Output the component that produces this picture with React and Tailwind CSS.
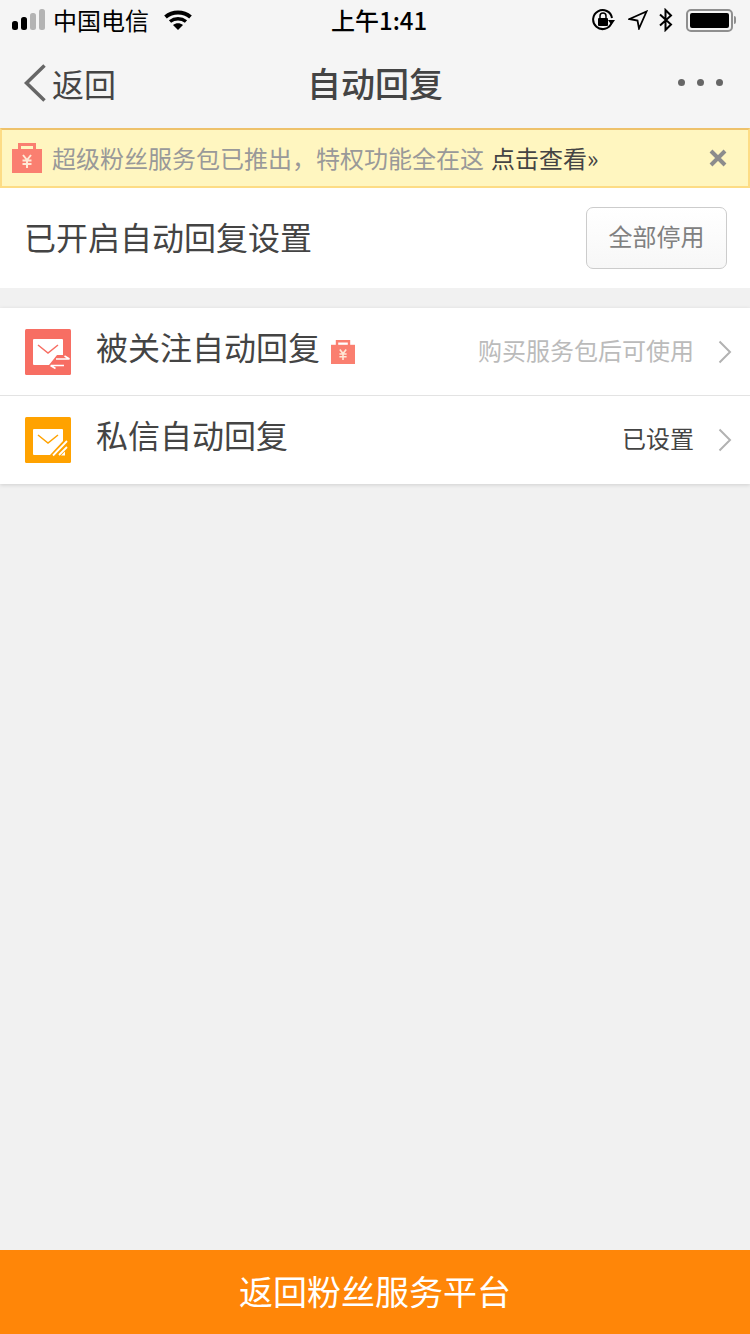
import React from "react";

const font = { fontFamily: '"Noto Sans CJK SC", "Liberation Sans", sans-serif' };

const BagIcon = ({ className }) => (
  <svg viewBox="0 0 30 30" className={className}>
    <path d="M7.500 7V1.500h15V7" fill="none" stroke="#fa7f70" strokeWidth="3" />
    <rect x="0" y="6" width="30" height="24" fill="#fa7f70" />
    <path d="M11 12l4 5 4-5M10.500 17.500h9M10.500 21h9M15 17v8" fill="none" stroke="#ffe9d6" strokeWidth="2" />
  </svg>
);

const MailFollowIcon = () => (
  <svg viewBox="0 0 46 46" className="w-[46px] h-[46px] shrink-0">
    <rect width="46" height="46" rx="1.500" fill="#f76e63" />
    <path d="M9 10h28a1 1 0 0 1 1 1v15h-6l-8 10H9a1 1 0 0 1-1-1V11a1 1 0 0 1 1-1z" fill="#fff" />
    <path d="M13 16l10 8 10-8" fill="none" stroke="#f76e63" strokeWidth="1.500" />
    <path d="M31 30h13.500M44.500 30l-5-3M26 36.500h13M25.500 36.500l5 3" fill="none" stroke="#fff" strokeWidth="1.600" />
  </svg>
);

const MailPrivateIcon = () => (
  <svg viewBox="0 0 46 46" className="w-[46px] h-[46px] shrink-0">
    <rect width="46" height="46" rx="1.500" fill="#ffa200" />
    <path d="M9 12h28a1 1 0 0 1 1 1v11L25 38H9a1 1 0 0 1-1-1V13a1 1 0 0 1 1-1z" fill="#fff" />
    <path d="M13 18l10 8 10-8" fill="none" stroke="#ffa200" strokeWidth="1.500" />
    <path d="M28 38.500L42 24M34 38l8-8" fill="none" stroke="#fff" strokeWidth="1.800" />
    <path d="M36 38.500h4v-4z" fill="#fff" />
  </svg>
);

const Chevron = () => (
  <svg viewBox="0 0 16 24" className="w-4 h-6 ml-[23px] shrink-0">
    <path d="M2.500 1.500L13 12 2.500 22.500" fill="none" stroke="#b2b2b2" strokeWidth="2" />
  </svg>
);

const StatusBar = () => (
  <div className="h-10 flex items-center relative text-black">
    <svg viewBox="0 0 34 22" className="w-[34px] h-[22px] ml-3">
      <rect x="0" y="12" width="6" height="9" rx="2.500" fill="#000" />
      <rect x="9" y="8" width="6" height="13" rx="2.500" fill="#000" />
      <rect x="18" y="4" width="6" height="17" rx="2.500" fill="#b4b4b4" />
      <rect x="27" y="0" width="6" height="21" rx="2.500" fill="#b4b4b4" />
    </svg>
    <span className="text-[24px] leading-none ml-[7px]">中国电信</span>
    <svg viewBox="0 0 28 20" className="w-7 h-5 ml-[15px]">
      <path d="M1.500 7C8.500 1 19.500 1 26.500 7" fill="none" stroke="#000" strokeWidth="4" />
      <path d="M6 11.500c4.800-3.800 11.200-3.800 16 0" fill="none" stroke="#000" strokeWidth="3.500" />
      <path d="M9 15c3-2.300 7-2.300 10 0l-5 5z" fill="#000" />
    </svg>
    <span className="absolute left-[331px] top-[5px] text-[24px] leading-[30px] font-medium">上午1:41</span>
    <div className="ml-auto mr-[14px] flex items-center">
      <svg viewBox="0 0 24 24" className="w-6 h-6">
        <path d="M20.500 15A9.500 9.500 0 1 1 21 10" fill="none" stroke="#000" strokeWidth="2" />
        <path d="M17 12h7l-3.500 5z" fill="#000" />
        <rect x="7" y="10" width="10" height="8" rx="1" fill="#000" />
        <path d="M9 10V8a3 3 0 0 1 6 0v2" fill="none" stroke="#000" strokeWidth="1.500" />
      </svg>
      <svg viewBox="0 0 20 20" className="w-5 h-5 ml-[13px]">
        <path d="M1.500 9L18.500 1.500 11 18.500 9.500 10.500z" fill="none" stroke="#000" strokeWidth="1.800" strokeLinejoin="miter" />
      </svg>
      <svg viewBox="0 0 16 24" className="w-4 h-6 ml-[10px]">
        <path d="M2 6.500L13 16.500 7.500 22V2L13 7.500 2 17.500" fill="none" stroke="#000" strokeWidth="2" />
      </svg>
      <div className="ml-[12px] w-[47px] h-[23px] border-[2px] border-[#8f8f8f] rounded-[5px] p-[2px]">
        <div className="w-full h-full bg-black rounded-[2px]" />
      </div>
      <div className="w-[2px] h-2 bg-[#8f8f8f] ml-[1px] rounded-r-sm" />
    </div>
  </div>
);

const NavBar = () => (
  <div className="h-[88px] flex items-center relative pb-[3px]">
    <svg viewBox="0 0 24 38" className="w-6 h-[38px] ml-[23px]">
      <path d="M21.500 1.500L3.500 19l18 17.500" fill="none" stroke="#666" strokeWidth="3.500" />
    </svg>
    <span className="text-[32px] leading-none text-[#444] ml-[5px]">返回</span>
    <span className="absolute left-0 right-0 text-center text-[34px] leading-none font-medium text-[#444]">自动回复</span>
    <div className="ml-auto mr-[27px] flex gap-[12px]">
      <i className="block w-[7px] h-[7px] rounded-full bg-[#666]" />
      <i className="block w-[7px] h-[7px] rounded-full bg-[#666]" />
      <i className="block w-[7px] h-[7px] rounded-full bg-[#666]" />
    </div>
  </div>
);

const Banner = () => (
  <div className="h-[60px] bg-[#fff6c0] border-2 border-[#fddc85] border-t-[#eec26b] flex items-center pl-[10px]">
    <BagIcon className="w-[30px] h-[30px] shrink-0" />
    <span className="text-[24px] leading-none text-[#999] ml-[10px] -mt-px whitespace-nowrap">超级粉丝服务包已推出，特权功能全在这</span>
    <span className="text-[24px] leading-none text-[#444] ml-[7px] -mt-px whitespace-nowrap">点击查看»</span>
    <svg viewBox="0 0 18 18" className="w-[18px] h-[18px] ml-auto mr-[21px]">
      <path d="M2 2l14 14M16 2L2 16" stroke="#8c8c8c" strokeWidth="4" fill="none" />
    </svg>
  </div>
);

const Row = ({ icon, title, badge, note, noteColor, border }) => (
  <div className={`flex items-center h-[88px] pl-[25px] pr-[17px] ${border ? "border-b border-[#e3e3e3]" : ""}`}>
    {icon}
    <span className="text-[32px] leading-none text-[#444] ml-[25px] mt-[-12px]">{title}</span>
    {badge && <BagIcon className="w-6 h-6 ml-[11px]" />}
    <span className={`ml-auto text-[24px] leading-none -mt-1 ${noteColor}`}>{note}</span>
    <Chevron />
  </div>
);

export default function App() {
  return (
    <div className="w-[750px] h-[1334px] flex flex-col bg-[#f1f1f1]" style={font}>
      <div className="bg-[#f5f5f5]">
        <StatusBar />
        <NavBar />
      </div>
      <Banner />

      <div className="h-[100px] bg-white flex items-center justify-between pl-6 pr-[23px]">
        <span className="text-[32px] leading-none text-[#444] -mt-1">已开启自动回复设置</span>
        <button className="w-[141px] h-[62px] pb-1 border border-[#ccc] rounded-[7px] bg-gradient-to-b from-white to-[#f7f7f7] text-[24px] leading-none text-[#808080]">
          全部停用
        </button>
      </div>

      <div className="mt-5 bg-white shadow-[0_1px_4px_rgba(0,0,0,0.14)]">
        <Row
          icon={<MailFollowIcon />}
          title="被关注自动回复"
          badge
          note="购买服务包后可使用"
          noteColor="text-[#bbb]"
          border
        />
        <Row icon={<MailPrivateIcon />} title="私信自动回复" note="已设置" noteColor="text-[#444]" />
      </div>

      <div className="mt-auto h-[84px] pb-[2px] bg-[#ff8608] flex items-center justify-center text-[34px] leading-none text-white">
        返回粉丝服务平台
      </div>
    </div>
  );
}
